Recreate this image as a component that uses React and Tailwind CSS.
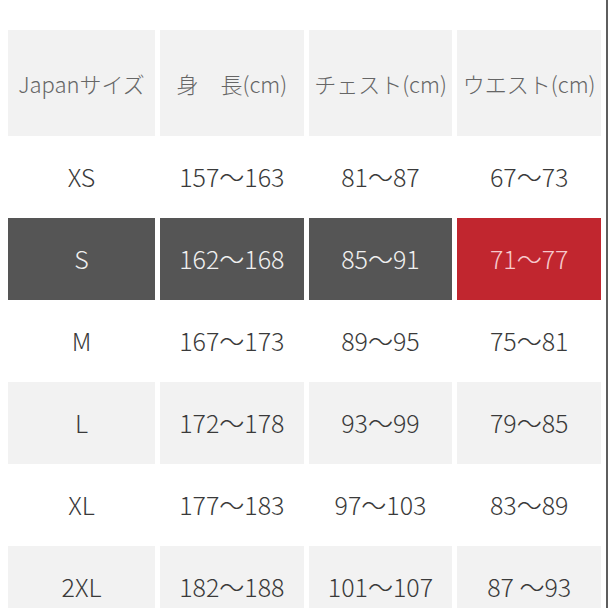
const head = ["Japanサイズ", "身　長(cm)", "チェスト(cm)", "ウエスト(cm)"];

const rows = [
  { cells: ["XS", "157～163", "81～87", "67～73"], tone: "white" },
  { cells: ["S", "162～168", "85～91", "71～77"], tone: "dark" },
  { cells: ["M", "167～173", "89～95", "75～81"], tone: "white" },
  { cells: ["L", "172～178", "93～99", "79～85"], tone: "gray" },
  { cells: ["XL", "177～183", "97～103", "83～89"], tone: "white" },
  { cells: ["2XL", "182～188", "101～107", "87 ～93"], tone: "gray" },
];

function cellClass(tone, i) {
  if (tone === "dark") {
    return i === 3 ? "bg-[#c1262f] text-[#f6c9cc]" : "bg-[#555555] text-[#f0f0f0]";
  }
  if (tone === "gray") return "bg-[#f2f2f2] text-[#3a3a3a]";
  return "bg-white text-[#3a3a3a]";
}

export default function App() {
  return (
    <div
      className="w-[608px] h-[608px] overflow-hidden bg-white border-r-2 border-[#5e5e5e]"
      style={{ fontFamily: '"Noto Sans CJK JP", "Noto Sans", sans-serif' }}
    >
      <div className="pt-[30px] pl-[8px] w-[601px]">
        <div className="grid grid-cols-[147px_1fr_1fr_1fr] gap-x-[5px]">
          {head.map((h) => (
            <div
              key={h}
              className="h-[106px] bg-[#f2f2f2] flex items-center justify-center text-[22px] font-light text-[#666666] whitespace-nowrap"
            >
              {h}
            </div>
          ))}
        </div>
        {rows.map((r, ri) => (
          <div key={ri} className="grid grid-cols-[147px_1fr_1fr_1fr] gap-x-[5px]">
            {r.cells.map((c, i) => (
              <div
                key={i}
                className={`h-[82px] flex items-center justify-center text-[25px] font-light whitespace-nowrap ${cellClass(r.tone, i)}`}
              >
                {c}
              </div>
            ))}
          </div>
        ))}
      </div>
    </div>
  );
}
